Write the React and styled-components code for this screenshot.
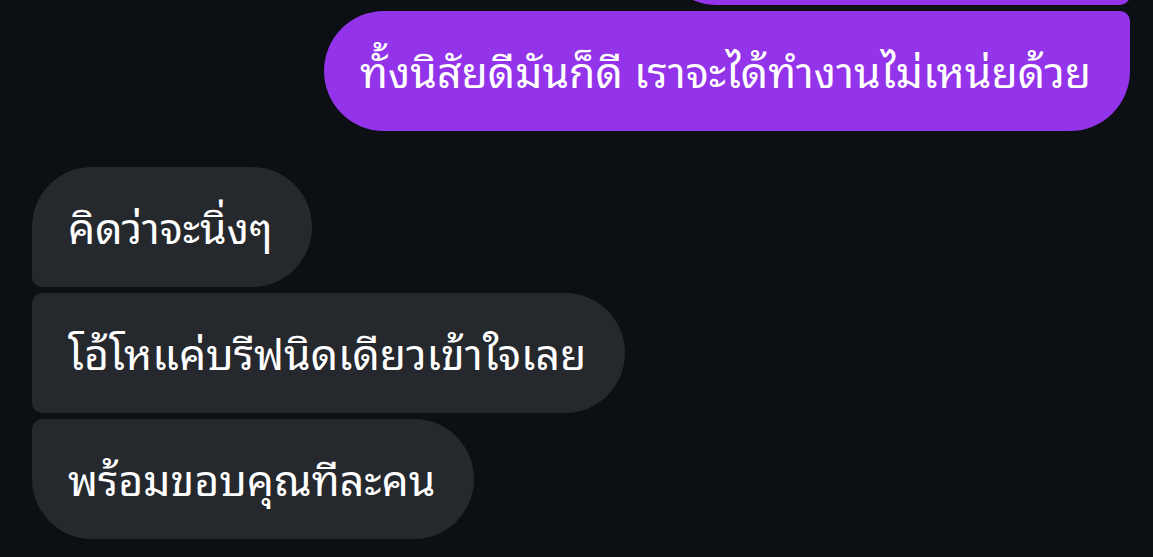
import React from "react";
import styled, { createGlobalStyle } from "styled-components";

const Global = createGlobalStyle`
  html, body { margin: 0; padding: 0; background: #0c0f13; overflow: hidden; }
  body { font-family: "Noto Sans Thai Looped", "Noto Sans Thai", "Noto Sans", sans-serif; }
`;

const Page = styled.div`
  width: 1153px;
  height: 557px;
  background: #0c0f13;
  display: flex;
  flex-direction: column;
  padding: 0 23px 0 32px;
  box-sizing: border-box;
  overflow: hidden;
`;

const Group = styled.div`
  display: flex;
  flex-direction: column;
  align-items: ${(p) => (p.$mine ? "flex-end" : "flex-start")};
  gap: 6px;
  margin-top: ${(p) => p.$offset || 0}px;
`;

const radius = (pos, mine) => {
  const big = "60px";
  const small = "10px";
  if (mine) {
    const tr = pos === "first" || pos === "single" ? big : small;
    const br = pos === "last" || pos === "single" ? big : small;
    return `${big} ${tr} ${br} ${big}`;
  }
  const tl = pos === "first" || pos === "single" ? big : small;
  const bl = pos === "last" || pos === "single" ? big : small;
  return `${tl} ${big} ${big} ${bl}`;
};

const Bubble = styled.div`
  height: 120px;
  box-sizing: border-box;
  display: flex;
  align-items: center;
  padding: 0 39px 4px 36px;
  min-width: ${(p) => p.$minWidth || 0}px;
  border-radius: ${(p) => radius(p.$pos, p.$mine)};
  background: ${(p) => (p.$mine ? "#9333ea" : "#25282d")};
  color: #ffffff;
  font-size: 42.8px;
  white-space: nowrap;
`;

export default function App() {
  return (
    <Page>
      <Global />
      <Group $mine $offset={-115}>
        <Bubble $mine $pos="first" $minWidth={473} aria-hidden="true" />
        <Bubble $mine $pos="last">ทั้งนิสัยดีมันก็ดี เราจะได้ทำงานไม่เหน่ยด้วย</Bubble>
      </Group>
      <Group $offset={36}>
        <Bubble $pos="first">คิดว่าจะนิ่งๆ</Bubble>
        <Bubble $pos="middle">โอ้โหแค่บรีฟนิดเดียวเข้าใจเลย</Bubble>
        <Bubble $pos="last">พร้อมขอบคุณทีละคน</Bubble>
      </Group>
    </Page>
  );
}
